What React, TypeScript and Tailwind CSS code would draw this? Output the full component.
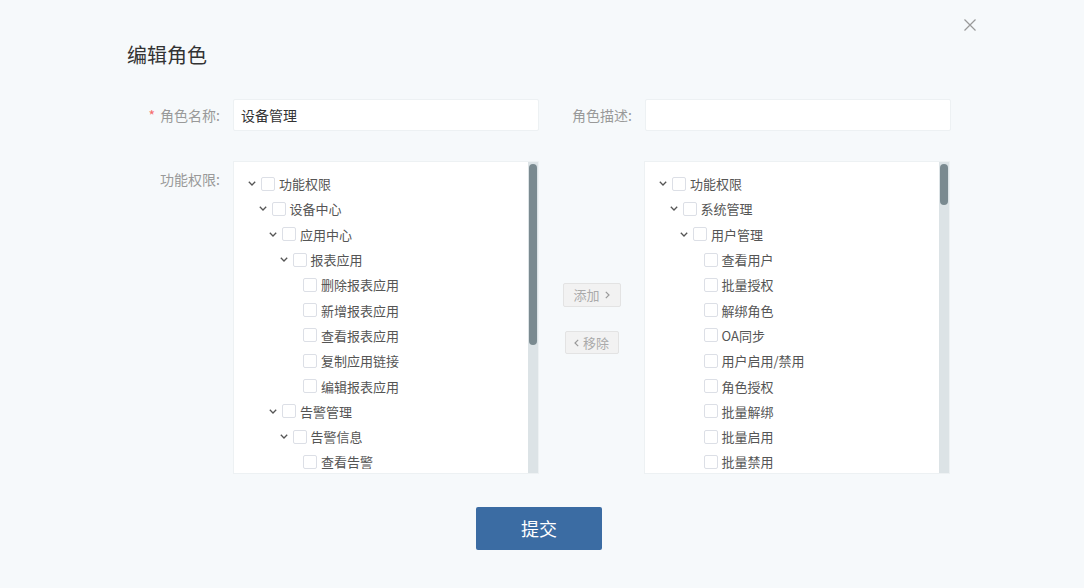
import React from "react";

type Node = { label: string; depth: number; branch?: boolean };

const leftTree: Node[] = [
  { label: "功能权限", depth: 0, branch: true },
  { label: "设备中心", depth: 1, branch: true },
  { label: "应用中心", depth: 2, branch: true },
  { label: "报表应用", depth: 3, branch: true },
  { label: "删除报表应用", depth: 4 },
  { label: "新增报表应用", depth: 4 },
  { label: "查看报表应用", depth: 4 },
  { label: "复制应用链接", depth: 4 },
  { label: "编辑报表应用", depth: 4 },
  { label: "告警管理", depth: 2, branch: true },
  { label: "告警信息", depth: 3, branch: true },
  { label: "查看告警", depth: 4 },
];

const rightTree: Node[] = [
  { label: "功能权限", depth: 0, branch: true },
  { label: "系统管理", depth: 1, branch: true },
  { label: "用户管理", depth: 2, branch: true },
  { label: "查看用户", depth: 3 },
  { label: "批量授权", depth: 3 },
  { label: "解绑角色", depth: 3 },
  { label: "OA同步", depth: 3 },
  { label: "用户启用/禁用", depth: 3 },
  { label: "角色授权", depth: 3 },
  { label: "批量解绑", depth: 3 },
  { label: "批量启用", depth: 3 },
  { label: "批量禁用", depth: 3 },
];

function Chevron() {
  return (
    <svg width="8" height="5" viewBox="0 0 8 5" fill="none">
      <polyline points="0.8,0.8 4,4 7.2,0.8" stroke="#555" strokeWidth="1.3" />
    </svg>
  );
}

function TreeRow({ node }: { node: Node }) {
  return (
    <div
      className="flex h-[25.3px] shrink-0 items-center"
      style={{ paddingLeft: 13 + node.depth * 10.5 }}
    >
      <span className="flex w-[10px] justify-center">{node.branch ? <Chevron /> : null}</span>
      <span className="ml-[4px] h-[14px] w-[14px] rounded-[2px] border border-[#dcdfe6] bg-white" />
      <span className="ml-[4px] whitespace-nowrap text-[13px] leading-none text-[#555]">
        {node.label}
      </span>
    </div>
  );
}

function TreeBox({ nodes, thumb }: { nodes: Node[]; thumb: number }) {
  return (
    <div className="flex h-[313px] w-[306px] border border-[#edf1f3] bg-white">
      <div className="flex flex-1 flex-col overflow-hidden pt-[9px]">
        {nodes.map((n, i) => (
          <TreeRow key={i} node={n} />
        ))}
      </div>
      <div className="w-[10px] bg-[#dce3e6] px-[1px] pt-[2px]">
        <div className="rounded-[4px] bg-[#7a8a90]" style={{ height: thumb }} />
      </div>
    </div>
  );
}

function Label({ text, required }: { text: string; required?: boolean }) {
  return (
    <div className="flex w-[93px] justify-end text-[14px] leading-none text-[#999]">
      {required && <span className="mr-[5px] text-[#f56c6c]">*</span>}
      {text}
    </div>
  );
}

export default function App() {
  return (
    <div
      className="relative h-[588px] w-full bg-[#f6f9fb]"
      style={{ fontFamily: '"Noto Sans CJK SC", "Noto Sans", sans-serif' }}
    >
      <button className="absolute left-[964px] top-[19px]">
        <svg width="12" height="12" viewBox="0 0 12 12">
          <path d="M0.5 0.5L11.5 11.5M11.5 0.5L0.5 11.5" stroke="#999" strokeWidth="1.2" />
        </svg>
      </button>

      <div className="w-[824px] pt-[44px]" style={{ marginLeft: 127 }}>
        <h1 className="text-[20px] font-normal leading-[22px] text-[#333]">编辑角色</h1>

        <div className="mt-[33px] flex items-center">
          <Label text="角色名称:" required />
          <div className="ml-[13px] flex h-[32px] w-[306px] items-center rounded-[2px] border border-[#edf1f3] bg-white pl-[7px] text-[14px] text-[#333]">
            设备管理
          </div>
          <Label text="角色描述:" />
          <div className="ml-[13px] h-[32px] w-[306px] rounded-[2px] border border-[#edf1f3] bg-white" />
        </div>

        <div className="mt-[30px] flex items-start">
          <div className="pt-[11px]">
            <Label text="功能权限:" />
          </div>
          <div className="ml-[13px]">
            <TreeBox nodes={leftTree} thumb={181} />
          </div>
          <div className="flex w-[105px] flex-col items-center pt-[122px]">
            <button className="flex h-[24px] w-[58px] items-center justify-center gap-[5px] rounded-[2px] border border-[#e3e3e3] bg-[#f2f2f2] text-[13px] text-[#aaa]">
              添加
              <svg width="5" height="8" viewBox="0 0 5 8" fill="none">
                <polyline points="0.8,0.8 4,4 0.8,7.2" stroke="#999" strokeWidth="1.2" />
              </svg>
            </button>
            <button className="mt-[24px] flex h-[23px] w-[54px] items-center justify-center gap-[4px] rounded-[2px] border border-[#e3e3e3] bg-[#f2f2f2] text-[13px] text-[#aaa]">
              <svg width="5" height="8" viewBox="0 0 5 8" fill="none">
                <polyline points="4.2,0.8 1,4 4.2,7.2" stroke="#999" strokeWidth="1.2" />
              </svg>
              移除
            </button>
          </div>
          <TreeBox nodes={rightTree} thumb={41} />
        </div>

        <div className="mt-[33px] flex justify-center">
          <button className="h-[43px] w-[126px] rounded-[2px] bg-[#3b6ca3] text-[18px] text-white">
            提交
          </button>
        </div>
      </div>
    </div>
  );
}
